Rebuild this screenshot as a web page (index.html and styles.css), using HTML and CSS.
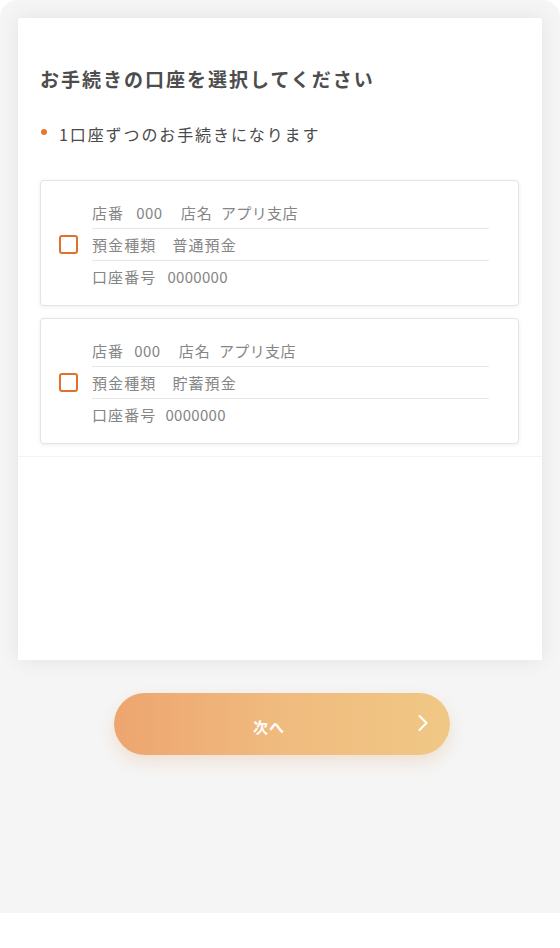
FILE: index.html
```html
<!DOCTYPE html>
<html lang="ja">
<head>
<meta charset="utf-8">
<title>口座選択</title>
<link rel="stylesheet" href="styles.css">
</head>
<body>
<div class="frame">
  <div class="panel">
    <div class="section">
      <h1 class="title">お手続きの口座を選択してください</h1>
      <p class="note"><span class="dot"></span>1口座ずつのお手続きになります</p>
      <div class="accounts">
        <label class="account">
          <span class="check"></span>
          <span class="rows">
            <span class="row"><span class="k">店番</span><span class="v1">000</span><span class="k2">店名</span><span class="v">アプリ支店</span></span>
            <span class="row"><span class="k">預金種類</span><span class="v2">普通預金</span></span>
            <span class="row"><span class="k">口座番号</span><span class="v3">0000000</span></span>
          </span>
        </label>
        <label class="account">
          <span class="check"></span>
          <span class="rows">
            <span class="row"><span class="k">店番</span><span class="v1 tight">000</span><span class="k2">店名</span><span class="v tight">アプリ支店</span></span>
            <span class="row"><span class="k">預金種類</span><span class="v2">貯蓄預金</span></span>
            <span class="row"><span class="k">口座番号</span><span class="v3 tight">0000000</span></span>
          </span>
        </label>
      </div>
    </div>
  </div>
  <button class="next" type="button">
    <span class="next-label">次へ</span>
    <svg class="chev" width="12" height="18" viewBox="0 0 12 18" aria-hidden="true"><path d="M2.5 2 L9.5 9 L2.5 16" fill="none" stroke="#ffffff" stroke-width="2" stroke-linecap="round" stroke-linejoin="round"/></svg>
  </button>
</div>
</body>
</html>
```

FILE: styles.css
```css
html, body {
  margin: 0;
  padding: 0;
  background: #ffffff;
}
body {
  font-family: "Noto Sans CJK JP", "Noto Sans", sans-serif;
  width: 560px;
  height: 948px;
  overflow: hidden;
}
.frame {
  box-sizing: border-box;
  height: 913px;
  background: #f5f5f5;
  border-radius: 18px 18px 0 0;
  padding: 18px 18px 0 18px;
}
.panel {
  box-sizing: border-box;
  height: 642px;
  background: #ffffff;
  box-shadow: 0 0 20px rgba(0, 0, 0, 0.08);
}
.section {
  padding: 47px 23px 12px 22px;
  border-bottom: 1px solid #f4f4f4;
}
.title {
  margin: 0;
  font-size: 19px;
  line-height: 28px;
  font-weight: 700;
  color: #4d4d4d;
  letter-spacing: 2px;
}
.note {
  margin: 29px 0 0 0;
  display: flex;
  align-items: center;
  font-size: 16px;
  line-height: 24px;
  color: #4a4a4a;
  letter-spacing: 1.9px;
}
.dot {
  width: 6px;
  height: 6px;
  border-radius: 50%;
  background: #e8772e;
  margin: 0 12px 0 1px;
  position: relative;
  top: -2px;
}
.accounts {
  margin-top: 34px;
  display: flex;
  flex-direction: column;
  gap: 12px;
}
.account {
  display: flex;
  align-items: center;
  border: 1px solid #e4e4e4;
  border-radius: 4px;
  box-shadow: 0 1px 4px rgba(0, 0, 0, 0.07);
  padding: 15px 29px 13px 18px;
  background: #fff;
}
.check {
  box-sizing: border-box;
  width: 19px;
  height: 19px;
  border: 2px solid #e2702a;
  border-radius: 3px;
  flex: none;
  margin-right: 14px;
}
.rows {
  flex: 1;
  display: flex;
  flex-direction: column;
}
.row {
  box-sizing: border-box;
  height: 32px;
  display: flex;
  align-items: center;
  font-size: 15px;
  color: #858585;
  letter-spacing: 1.1px;
}
.row + .row {
  border-top: 1px solid #e6e6e6;
}
.v1 { margin-left: 12px; letter-spacing: 0.5px; }
.k2 { margin-left: 18px; }
.v { margin-left: 8px; letter-spacing: 0.4px; }
.v2 { margin-left: 16px; }
.v3 { margin-left: 11px; letter-spacing: 0.3px; }
.v1.tight { margin-left: 10px; }
.v3.tight { margin-left: 9px; }
.next {
  margin: 33px 0 0 96px;
  width: 336px;
  height: 62px;
  border: none;
  border-radius: 31px;
  background: linear-gradient(90deg, #eda56f 0%, #f0bb7e 50%, #f0c886 100%);
  box-shadow: 0 7px 16px rgba(225, 150, 90, 0.22);
  display: flex;
  align-items: center;
  justify-content: center;
  position: relative;
  padding: 0 26px 0 0;
  font-family: "Noto Sans CJK JP", "Noto Sans", sans-serif;
}
.next-label {
  color: #ffffff;
  font-size: 15px;
  font-weight: 700;
  letter-spacing: 1px;
  position: relative;
  top: 2px;
}
.chev {
  position: absolute;
  right: 21px;
  top: 21px;
}
```
